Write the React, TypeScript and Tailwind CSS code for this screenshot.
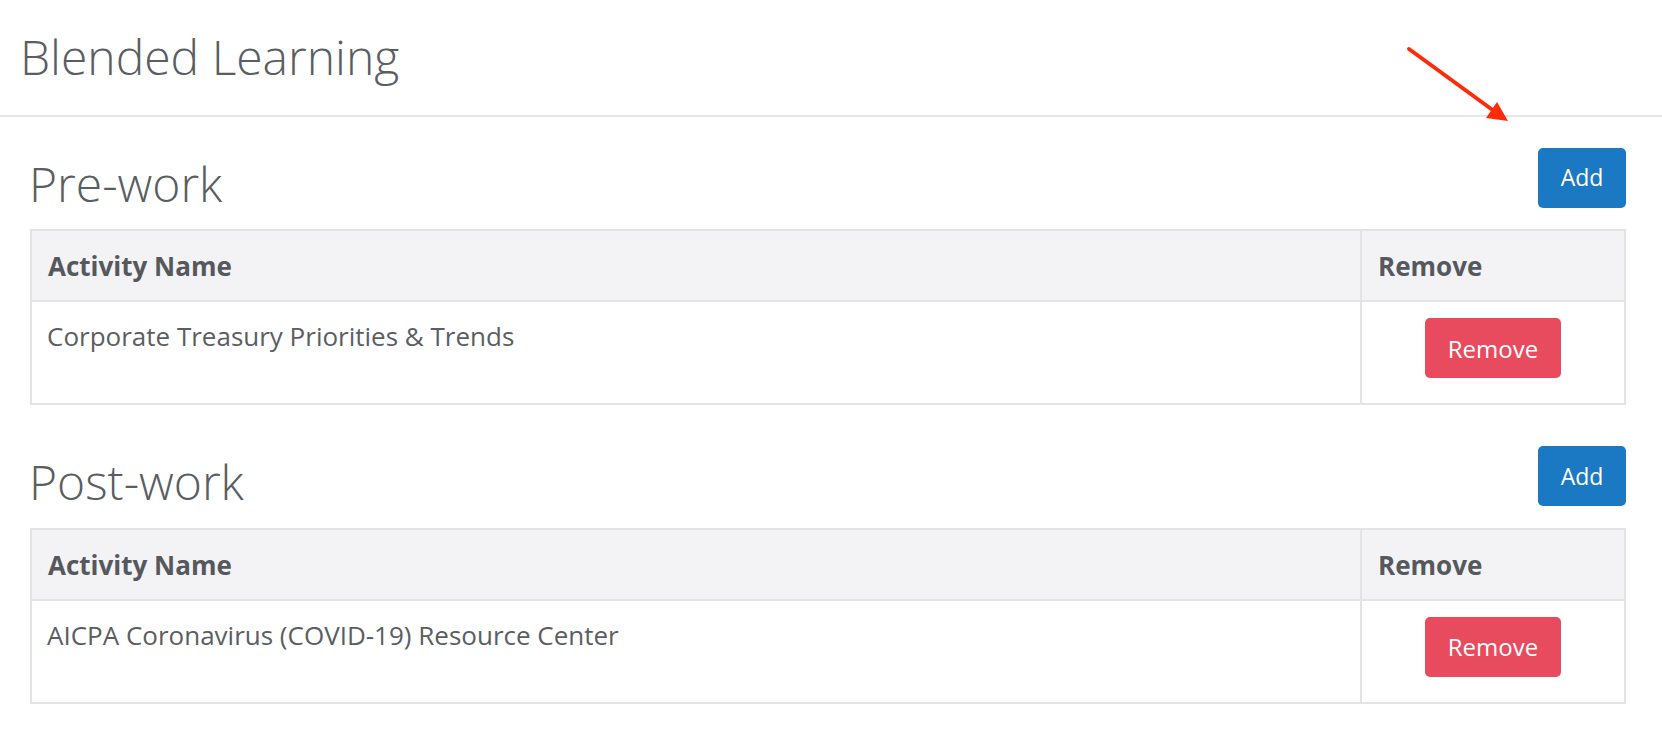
import React from 'react';

const sections = [
  { title: 'Pre-work', items: ['Corporate Treasury Priorities & Trends'] },
  { title: 'Post-work', items: ['AICPA Coronavirus (COVID-19) Resource Center'] },
];

function ActivitySection({ title, items }: { title: string; items: string[] }) {
  return (
    <section>
      <div className="flex items-start justify-between">
        <h2 className="ml-[-1px] mt-[7px] text-[48px] font-light leading-[1.2]">{title}</h2>
        <button className="h-[60px] w-[88px] rounded-[5px] bg-[#1b79c3] text-[23px] text-white">Add</button>
      </div>

      <div className="mt-[17px] border-2 border-[#e3e3e3]">
        <div className="grid grid-cols-[1fr_264px] border-b-2 border-[#e3e3e3] bg-[#f3f3f5] text-[26px] font-bold leading-[39px] text-[#55585c]">
          <div className="px-4 pb-[14px] pt-[16px]">Activity Name</div>
          <div className="border-l-2 border-[#e3e3e3] px-4 pb-[14px] pt-[16px]">Remove</div>
        </div>
        {items.map((item) => (
          <div key={item} className="grid grid-cols-[1fr_264px] text-[26px] leading-[39px]">
            <div className="px-[15px] pt-[15px]">{item}</div>
            <div className="flex justify-center border-l-2 border-[#e3e3e3] pb-[25px] pt-[16px]">
              <button className="h-[60px] w-[136px] rounded-[5px] bg-[#e84b5d] text-[24px] text-white">Remove</button>
            </div>
          </div>
        ))}
      </div>
    </section>
  );
}

export default function App() {
  return (
    <div className="relative min-h-screen bg-white text-[#5a5e62]" style={{ fontFamily: '"Open Sans", sans-serif' }}>
      {/* Page header */}
      <header className="border-b-2 border-[#e4e6e9] pb-[29px] pl-[20px] pt-[28px]">
        <h1 className="text-[48px] font-light leading-[1.2]">Blended Learning</h1>
      </header>

      <main className="flex flex-col gap-[41px] pl-[30px] pr-[36px] pt-[31px]">
        {sections.map((s) => (
          <ActivitySection key={s.title} title={s.title} items={s.items} />
        ))}
      </main>

      {/* annotation arrow */}
      <svg className="pointer-events-none absolute left-0 top-0" width="1662" height="200">
        <line x1="1409" y1="49" x2="1494" y2="111" stroke="#ff2a0a" strokeWidth="4" strokeLinecap="round" />
        <polygon points="1508,121 1486,118 1497,102" fill="#ff2a0a" />
      </svg>
    </div>
  );
}
